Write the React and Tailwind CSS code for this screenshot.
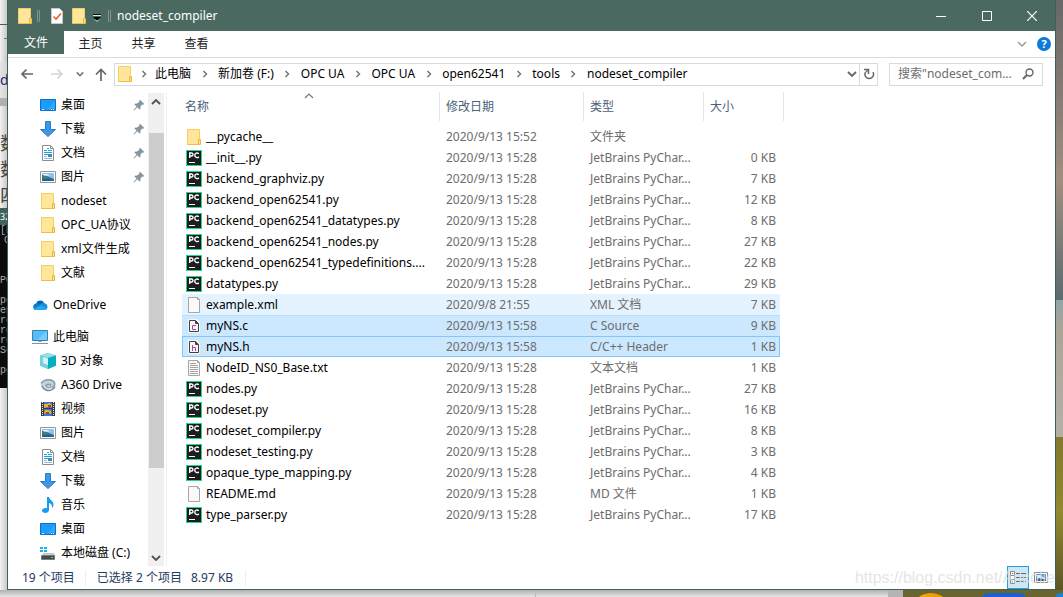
import React from "react";

const Folder = () => (
  <svg width="16" height="16" viewBox="0 0 16 16" className="shrink-0">
    <path d="M1.5.5h12v11h-1v4h-11z" fill="#ffe69a" stroke="#f3cf62" />
    <path d="M12.5 10.500h2v5h-2z" fill="#ffe08a" stroke="#e5bb3c" />
    <path d="M1.500 15.500h11" stroke="#e9c04a" />
  </svg>
);
const Desktop = () => (
  <svg width="16" height="16" viewBox="0 0 16 16" className="shrink-0">
    <path d="M.5 2.500h15v11H.5z" fill="#1a9cfb" stroke="#0f6fc0" />
    <path d="M15 3v8L7 13z" fill="#48b4ff" opacity=".5" />
    <path d="M2 12.500h2M11 12.500h1M13 12.500h1" stroke="#d8efff" />
  </svg>
);
const Download = () => (
  <svg width="16" height="16" viewBox="0 0 16 16" className="shrink-0">
    <path d="M5.500.5h5v8h5L8 15.600.5 8.500h5z" fill="#3f96e6" stroke="#2b7bcb" />
  </svg>
);
const Doc = () => (
  <svg width="16" height="16" viewBox="0 0 16 16" className="shrink-0">
    <path d="M2.500.5h8l3 3v12h-11z" fill="#fff" stroke="#8b8f93" />
    <path d="M10.500.5v3h3" fill="none" stroke="#8b8f93" />
    <path d="M7 3.500h2M4 5.500h3M8 5.500h4M4 7.500h8M4 9.500h4" stroke="#1f9be8" />
    <path d="M4 11.500h3M4 13.500h8" stroke="#9fb6c4" />
    <path d="M8 9h4v3H8z" fill="#3d8fae" />
  </svg>
);
const Picture = () => (
  <svg width="16" height="16" viewBox="0 0 16 16" className="shrink-0">
    <path d="M.5 2.500h15v11H.5z" fill="#fff" stroke="#92979c" />
    <path d="M2 4h12v8H2z" fill="#8cc4f0" />
    <path d="M2 6l5 1 7 3v2H2z" fill="#3f7a80" />
    <path d="M2 10.500l6-1 6 1.500v1H2z" fill="#2a5a9a" />
    <path d="M3 5h4l3 1.500H4z" fill="#eaf6ff" />
  </svg>
);
const OneDrive = () => (
  <svg width="16" height="16" viewBox="0 0 16 16" className="shrink-0">
    <path d="M4 6.500A4.500 4.500 0 0 1 12.200 6L9 10z" fill="#0364b8" />
    <path d="M3.500 13A3.400 3.400 0 0 1 4 6.400c1.500-.4 3 .2 4.500 1.500L12 11z" fill="#0f78d4" />
    <path d="M8 8c1.400-1.800 3-2.300 4.600-1.800A3.500 3.500 0 0 1 13 13H3.500z" fill="#1490df" />
    <path d="M1.500 12L8.500 8.200 15.300 11.500A2.600 2.600 0 0 1 13 13H3.500a3 3 0 0 1-2-1z" fill="#28a8ea" />
  </svg>
);
const Computer = () => (
  <svg width="16" height="16" viewBox="0 0 16 16" className="shrink-0">
    <path d="M.5 1.500h15v10H.5z" fill="#54bdfa" stroke="#3e7fa8" />
    <path d="M15 2v9L5 11z" fill="#8cd5ff" opacity=".6" />
    <path d="M6 12h4v1H6z" fill="#9fb0bb" />
    <path d="M0 14.500h16" stroke="#7d93a3" />
  </svg>
);
const Cube = () => (
  <svg width="16" height="16" viewBox="0 0 16 16" className="shrink-0">
    <path d="M8 0l8 2.500v10L8 16 0 12.500v-10z" fill="#35bccb" />
    <path d="M8 0l8 2.500L8 5 0 2.500z" fill="#9adfe6" />
    <path d="M0 2.500L8 5v11L0 12.500z" fill="#6fd2dc" />
    <path d="M8 5l8-2.500v10L8 16z" fill="#08aebf" />
    <path d="M3 4l5 1.500V12l-5-2z" fill="#d3f4f6" />
  </svg>
);
const A360 = () => (
  <svg width="16" height="16" viewBox="0 0 16 16" className="shrink-0">
    <path d="M1 7C3 2 11 .5 14.500 4c2 3 .5 8-5 9.500C5 14 2 12 1 9z" fill="#c3d1d9" />
    <path d="M1 6.500c3-4.500 10-5 13-1.500 2 3-.5 6-5 6-3 0-4-2.500-1.500-3.500 2-.6 3.500.5 3 1.500" fill="none" stroke="#86a0ae" strokeWidth="1.500" />
    <path d="M2 9c1.500 4 6 5.500 9.500 4 2-.8 3-2 3.500-3.500" fill="none" stroke="#6b8a9a" strokeWidth="1.300" />
    <path d="M4 9c2 3 5 3.500 8 1.800" fill="none" stroke="#eef4f7" />
  </svg>
);
const Video = () => (
  <svg width="16" height="16" viewBox="0 0 16 16" className="shrink-0">
    <path d="M1 1h14v14H1z" fill="#3b3b3d" />
    <path d="M2.500 1v14M13.500 1v14" stroke="#e8e8e8" strokeDasharray="1 1" />
    <path d="M4 1h8v6H4z" fill="#3f74d8" />
    <path d="M4 8h8v7H4z" fill="#3f74d8" />
    <path d="M4 3h3l2-1 3 2v2H8L4 7z" fill="#eab22a" />
    <path d="M5 9h3l3 1v3l-4-1-3 1z" fill="#eab22a" />
    <path d="M8 4h3v2H8zM6 11h3v2H6z" fill="#b3392e" />
  </svg>
);
const Music = () => (
  <svg width="16" height="16" viewBox="0 0 16 16" className="shrink-0">
    <path d="M7 0h2c.4 3 4.500 4 4.500 7.500 0 1.500-.5 2.700-1.500 3.500.5-3-1-4.300-3-5v7c0 2-1.800 3-3.600 3C3.500 16 2 15 2 13.500S3.800 11 5.500 11c.6 0 1 .1 1.500.3z" fill="#149cf5" />
  </svg>
);
const Disk = () => (
  <svg width="16" height="16" viewBox="0 0 16 16" className="shrink-0">
    <path d="M0 2h3v2H0zM4 2h3v2H4zM0 5h3v2H0zM4 5h3v2H4z" fill="#18b3ee" />
    <path d="M3 8h11l1 3H2z" fill="#c5c9cc" />
    <path d="M1.500 10.500h13v4h-13z" fill="#45494c" stroke="#7a7e81" />
    <path d="M11 12.500h2" stroke="#5ee04f" />
  </svg>
);
const PyCharm = () => (
  <svg width="16" height="16" viewBox="0 0 16 16" className="shrink-0">
    <path d="M0 0h16v16H0z" fill="#21d789" />
    <path d="M1 1h14v14H1z" fill="#1d1d1f" />
    <path d="M3.700 8V3h1.800a1.500 1.500 0 0 1 0 3H4M12.800 3.700C11.300 2.400 8.800 3 8.800 5.300s2.500 2.900 4 1.600" fill="none" stroke="#fff" strokeWidth="1.400" />
    <path d="M3 12.500h6" stroke="#fff" />
  </svg>
);
const Page = ({ lines }) => (
  <svg width="16" height="16" viewBox="0 0 16 16" className="shrink-0">
    <path d="M2.500.5h9l2 2v13h-11z" fill="#fafafa" stroke="#a6a6a6" />
    <path d="M11.500.5v2h2" fill="none" stroke="#a6a6a6" />
    {lines && <path d="M4 3.500h6M4 5.500h8M4 7.500h8M4 9.500h8M4 11.500h8M4 13.500h8" stroke="#a3a3a3" />}
  </svg>
);
const CodeC = () => (
  <svg width="16" height="16" viewBox="0 0 16 16" className="shrink-0">
    <path d="M2 1h9l3 3v11H2z" fill="#f6f6f6" />
    <path d="M3.500 2.500h6l3 3v8h-9z" fill="#f6f6f6" stroke="#424242" />
    <path d="M9.500 2.500v3h3" fill="#424242" stroke="#424242" />
    <path d="M10 7.500H6.500v4H10" fill="none" stroke="#9b4f96" />
  </svg>
);
const CodeH = () => (
  <svg width="16" height="16" viewBox="0 0 16 16" className="shrink-0">
    <path d="M2 1h9l3 3v11H2z" fill="#f6f6f6" />
    <path d="M3.500 2.500h6l3 3v8h-9z" fill="#f6f6f6" stroke="#424242" />
    <path d="M9.500 2.500v3h3" fill="#424242" stroke="#424242" />
    <path d="M6.500 6v6M6.500 8.500h3V12" fill="none" stroke="#9b4f96" />
  </svg>
);
const Pin = () => (
  <svg width="12" height="12" viewBox="0 0 12 12" className="shrink-0">
    <path d="M7 .8L11.200 5l-1 .8-.8-.2-2 2 .2 2-1 1L4.300 8.300 1 11.400l-.5-.5L3.600 7.600 1.400 5.400l1-1 2 .2 2-2-.2-.9z" fill="#8494a0" />
  </svg>
);
const Chevron = ({ dir = "down", color = "#666", size = 10, width = 1.5 }) => {
  const paths = { down: "M1 3l4 4 4-4", up: "M1 7l4-4 4 4", right: "M3.500 2l3 3-3 3" };
  return (
    <svg width={size} height={size} viewBox="0 0 10 10" className="shrink-0">
      <path d={paths[dir]} fill="none" stroke={color} strokeWidth={width} />
    </svg>
  );
};

const quick = [
  [Desktop, "桌面", true],
  [Download, "下载", true],
  [Doc, "文档", true],
  [Picture, "图片", true],
  [Folder, "nodeset"],
  [Folder, "OPC_UA协议"],
  [Folder, "xml文件生成"],
  [Folder, "文献"],
];
const computer = [
  [Cube, "3D 对象"],
  [A360, "A360 Drive"],
  [Video, "视频"],
  [Picture, "图片"],
  [Doc, "文档"],
  [Download, "下载"],
  [Music, "音乐"],
  [Desktop, "桌面"],
  [Disk, "本地磁盘 (C:)"],
];
const D = "2020/9/13 15:28";
const PY = "JetBrains PyChar...";
const TextPage = () => <Page lines />;
const files = [
  [Folder, "__pycache__", "2020/9/13 15:52", "文件夹", ""],
  [PyCharm, "__init__.py", D, PY, "0 KB"],
  [PyCharm, "backend_graphviz.py", D, PY, "7 KB"],
  [PyCharm, "backend_open62541.py", D, PY, "12 KB"],
  [PyCharm, "backend_open62541_datatypes.py", D, PY, "8 KB"],
  [PyCharm, "backend_open62541_nodes.py", D, PY, "27 KB"],
  [PyCharm, "backend_open62541_typedefinitions....", D, PY, "22 KB"],
  [PyCharm, "datatypes.py", D, PY, "29 KB"],
  [Page, "example.xml", "2020/9/8 21:55", "XML 文档", "7 KB", "hover"],
  [CodeC, "myNS.c", "2020/9/13 15:58", "C Source", "9 KB", "selected"],
  [CodeH, "myNS.h", "2020/9/13 15:58", "C/C++ Header", "1 KB", "focused"],
  [TextPage, "NodeID_NS0_Base.txt", D, "文本文档", "1 KB"],
  [PyCharm, "nodes.py", D, PY, "27 KB"],
  [PyCharm, "nodeset.py", D, PY, "16 KB"],
  [PyCharm, "nodeset_compiler.py", D, PY, "8 KB"],
  [PyCharm, "nodeset_testing.py", D, PY, "3 KB"],
  [PyCharm, "opaque_type_mapping.py", D, PY, "4 KB"],
  [Page, "README.md", D, "MD 文件", "1 KB"],
  [PyCharm, "type_parser.py", D, PY, "17 KB"],
];
const cellStyle = {
  hover: "bg-[#e5f3ff] border-y border-[#e5f3ff]",
  selected: "bg-[#cce8ff] border-y border-t-[#b5dcff] border-b-[#cce8ff]",
  focused: "bg-[#cce8ff] border-y border-[#84c5fb]",
  none: "border-y border-transparent",
};
const path = ["此电脑", "新加卷 (F:)", "OPC UA", "OPC UA", "open62541", "tools", "nodeset_compiler"];

function NavItem({ Icon, label, pinned, root }) {
  return (
    <li>
      <a href="#" className={`flex h-6 items-center gap-[5px] pr-[3px] text-black ${root ? "pl-6" : "pl-8"}`}>
        <Icon />
        <span className="flex-1 whitespace-nowrap">{label}</span>
        {pinned && <Pin />}
      </a>
    </li>
  );
}

function TitleBar() {
  return (
    <header className="flex h-[31px] items-center bg-[#4a6a61] pl-[9px] text-white">
      <Folder />
      <span className="ml-1 h-3 w-[3px] border-x border-[#81968f]" />
      <button aria-label="属性" className="ml-[9px]">
        <svg width="16" height="16" viewBox="0 0 16 16">
          <path d="M2.500.5h8l3 3v12h-11z" fill="#fff" stroke="#c8c8c8" />
          <path d="M4.500 8.500L7 11l5-5.500" fill="none" stroke="#e8602c" strokeWidth="1.600" />
        </svg>
      </button>
      <button aria-label="新建文件夹" className="ml-[6px]"><Folder /></button>
      <button aria-label="自定义快速访问工具栏" className="ml-[6px] pt-1">
        <svg width="8" height="8" viewBox="0 0 8 8">
          <path d="M0 .5h8" stroke="#111" />
          <path d="M0 1.500h8" stroke="#dfe6e3" />
          <path d="M0 3h8L4 7z" fill="#000" />
          <path d="M2 5.500L4 7.500l2-2" fill="none" stroke="#dfe6e3" />
        </svg>
      </button>
      <span className="ml-[7px] h-3 w-[3px] border-x border-[#81968f]" />
      <h1 className="ml-[6px] flex-1">nodeset_compiler</h1>
      <button aria-label="最小化" className="flex h-full w-[46px] items-center justify-center">
        <svg width="10" height="10" viewBox="0 0 10 10"><path d="M0 5.500h10" stroke="#fff" /></svg>
      </button>
      <button aria-label="最大化" className="flex h-full w-[45px] items-center justify-center">
        <svg width="10" height="10" viewBox="0 0 10 10"><path d="M.5.5h9v9h-9z" fill="none" stroke="#fff" /></svg>
      </button>
      <button aria-label="关闭" className="flex h-full w-[46px] items-center justify-center">
        <svg width="10" height="10" viewBox="0 0 10 10"><path d="M0 0l10 10M10 0L0 10" stroke="#fff" strokeWidth="1.200" /></svg>
      </button>
    </header>
  );
}

function Ribbon() {
  return (
    <div className="flex h-[27px] items-start border-b border-[#dadbdc] text-[#222]">
      <button className="h-[23px] w-14 bg-[#4a6a61] pt-px text-white">文件</button>
      <button className="h-[26px] w-[53px]">主页</button>
      <button className="h-[26px] w-[53px]">共享</button>
      <button className="h-[26px] w-[53px]">查看</button>
      <div className="ml-auto flex h-[26px] items-center gap-[10px] pr-1">
        <button aria-label="展开功能区"><Chevron color="#999" /></button>
        <button aria-label="帮助" className="flex size-[14px] items-center justify-center rounded-full bg-[#0c7ad8] text-[11px] font-bold text-white">?</button>
      </div>
    </div>
  );
}

function AddressRow() {
  return (
    <div className="mb-[2px] flex h-8 items-center pl-3 pr-3">
      <button aria-label="后退" className="w-[14px]">
        <svg width="14" height="12" viewBox="0 0 14 12"><path d="M13 6H2M6.500 1.500L2 6l4.500 4.500" fill="none" stroke="#666" strokeWidth="1.700" /></svg>
      </button>
      <button aria-label="前进" className="ml-4 w-[14px]">
        <svg width="14" height="12" viewBox="0 0 14 12"><path d="M1 6h11M7.500 1.500L12 6l-4.500 4.500" fill="none" stroke="#d4d4d4" strokeWidth="1.700" /></svg>
      </button>
      <button aria-label="最近浏览的位置" className="ml-3"><Chevron size={8} width={2} color="#777" /></button>
      <button aria-label="上移" className="ml-[11px]">
        <svg width="12" height="13" viewBox="0 0 12 13"><path d="M6 13V2M1 6.500l5-5 5 5" fill="none" stroke="#666" strokeWidth="1.700" /></svg>
      </button>
      <div className="ml-[7px] flex h-[23px] flex-1 items-center border border-[#d9d9d9] pl-[2px]">
        <Folder />
        <nav className="flex flex-1 items-center whitespace-nowrap text-black">
          {path.map((p, i) => (
            <React.Fragment key={i}>
              <span className={`flex justify-center ${i ? "w-[27px]" : "w-[22px]"}`}><Chevron dir="right" color="#777" /></span>
              <a href="#">{p}</a>
            </React.Fragment>
          ))}
        </nav>
        <button aria-label="以前的位置" className="flex w-[14px] justify-center"><Chevron width={1.800} /></button>
        <button aria-label="刷新" className="flex h-full w-[18px] items-center justify-center border-l border-[#d9d9d9]">
          <svg width="12" height="12" viewBox="0 0 12 12">
            <path d="M10 4.200A4.300 4.300 0 1 1 2.300 4.500" fill="none" stroke="#666" strokeWidth="1.500" />
            <path d="M1 1.500h4.500V6" fill="none" stroke="#666" strokeWidth="1.500" />
            <path d="M5.500 1.500L2.300 4.700" fill="none" stroke="#666" strokeWidth="1.200" />
          </svg>
        </button>
      </div>
      <label className="ml-[11px] flex h-[23px] w-[154px] items-center border border-[#d9d9d9] pl-2 pr-2">
        <input aria-label="搜索" placeholder={'搜索"nodeset_com...'} className="min-w-0 flex-1 outline-none placeholder:text-[#6d6d6d]" />
        <svg width="12" height="12" viewBox="0 0 12 12" className="shrink-0">
          <circle cx="7.500" cy="4.500" r="3.500" fill="none" stroke="#666" strokeWidth="1.400" />
          <path d="M5 7L1 11" stroke="#666" strokeWidth="2" />
        </svg>
      </label>
    </div>
  );
}

function Sidebar() {
  return (
    <aside className="flex border-r border-[#f0f0f0] pr-[2px]">
      <nav className="w-[140px] py-px">
        <ul>{quick.map(([I, l, p]) => <NavItem key={l} Icon={I} label={l} pinned={p} />)}</ul>
        <ul className="mt-2"><NavItem Icon={OneDrive} label="OneDrive" root /></ul>
        <ul className="mt-2">
          <NavItem Icon={Computer} label="此电脑" root />
          {computer.map(([I, l]) => <NavItem key={l} Icon={I} label={l} />)}
        </ul>
      </nav>
      <div className="mt-px flex w-4 flex-col items-center bg-[#f0f0f0]">
        <button aria-label="向上滚动" className="flex h-[18px] w-full items-center justify-center"><Chevron dir="up" width={1.800} color="#505050" /></button>
        <div className="mt-[22px] h-[335px] w-[15px] bg-[#cdcdcd]" />
        <button aria-label="向下滚动" className="mt-auto flex h-[17px] w-full items-center justify-center"><Chevron width={1.800} color="#505050" /></button>
      </div>
    </aside>
  );
}

function FileTable() {
  const head = "h-[29px] border-r border-[#e5e5e5] text-left font-normal text-[#4c607a]";
  return (
    <main className="flex-1 pl-[15px]">
      <table className="w-[602px] table-fixed border-separate border-spacing-0 whitespace-nowrap">
        <colgroup>
          <col className="w-[258px]" /><col className="w-[144px]" /><col className="w-[120px]" /><col className="w-[76px]" /><col className="w-1" />
        </colgroup>
        <thead>
          <tr>
            <th className={`${head} pl-[3px]`}>
              <button className="relative">名称
                <span className="absolute -top-2 left-[119px]"><Chevron dir="up" color="#777" width={1.200} /></span>
              </button>
            </th>
            <th className={`${head} pl-[6px]`}><button>修改日期</button></th>
            <th className={`${head} pl-[6px]`}><button>类型</button></th>
            <th colSpan={2} className={`${head} pl-[6px]`}><button>大小</button></th>
          </tr>
        </thead>
        <tbody>
          <tr aria-hidden="true"><td colSpan={5} className="h-[5px]" /></tr>
          {files.map(([Icon, name, date, type, size, state]) => {
            const s = cellStyle[state || "none"];
            const focused = state === "focused";
            return (
              <tr key={name} className="h-[21px] text-[#6d6d6d]">
                <td className={`${s} p-0 text-black ${focused ? "border-l pl-[3px]" : "pl-1"}`}>
                  <span className="flex h-[19px] items-center gap-1"><Icon />{name}</span>
                </td>
                <td className={`${s} p-0 pl-[6px]`}>{date}</td>
                <td className={`${s} p-0 pl-[6px]`}>{type}</td>
                <td className={`${s} p-0 text-right ${focused ? "border-r pr-[3px]" : "pr-1"}`}>{size}</td>
              </tr>
            );
          })}
        </tbody>
      </table>
    </main>
  );
}

function StatusBar() {
  return (
    <footer className="relative flex h-[23px] items-center pl-[14px] pr-[3px] text-[#1e3a5f]">
      <span className="border-r border-[#eee] pr-[10px]">19 个项目</span>
      <span className="pl-[11px]">已选择 2 个项目</span>
      <span className="border-r border-[#eee] pl-[9px] pr-3">8.97 KB</span>
      <div className="ml-auto flex items-center">
        <button aria-label="详细信息" className="flex h-[23px] w-[22px] items-center justify-center border border-[#26a0da] bg-[#cce8f6]">
          <svg width="16" height="13" viewBox="0 0 16 13">
            <path d="M.5.5h4v12h-4zM.5 4.500h4M.5 8.500h4" fill="#fff" stroke="#8a8a8a" />
            <path d="M6 2.500h4M11 2.500h5M6 6.500h4M11 6.500h5M6 10.500h4M11 10.500h5" stroke="#6b6b6b" />
            <path d="M2 2h1v1H2zM2 10h1v1H2z" fill="#b04040" />
          </svg>
        </button>
        <button aria-label="大图标" className="flex h-[23px] w-[23px] items-center justify-center">
          <svg width="14" height="11" viewBox="0 0 14 11">
            <path d="M.5.5h13v10H.5z" fill="#fff" stroke="#8a8a8a" />
            <path d="M2 2h10v7H2z" fill="#4f8fe0" />
            <path d="M3 3h4v1l4 2v1H3z" fill="#d8ecff" />
            <path d="M2 7l4-1 6 2v1H2z" fill="#3a5a66" />
          </svg>
        </button>
      </div>
      <span className="pointer-events-none absolute right-0 top-1 font-['Liberation_Sans'] text-base leading-4 text-[#dedede]/80">https://blog.csdn.net/Ancolie</span>
    </footer>
  );
}

function LeftEdge() {
  return (
    <div className="flex w-[7px] flex-col overflow-hidden whitespace-nowrap bg-linear-to-r from-[#f2f2f2] to-[#c9c9c9] text-[#444]">
      <div className="h-[62px] pt-6"><div className="h-px w-[7px] bg-[#555]" /><div className="ml-1 mt-[13px] h-px w-1 bg-[#777]" /></div>
      <div className="h-[36px] bg-[#dcdcdc]/60 pt-2 text-sm text-[#1a2a80]">d</div>
      <div className="h-2 bg-[#b0b0b0]" />
      <div className="h-[102px] pt-[24px] text-[18px] leading-[26px]">
        <p>数</p><p>数</p><p>四</p>
      </div>
      <div className="h-[17px] bg-[#40625a] text-[9px] leading-[17px] text-white">32</div>
      <div className="h-[163px] bg-[#0c0c0c] pt-px font-['Liberation_Mono'] text-[10px] leading-[10px] text-[#aaa]">
        <p>[H</p><p className="pl-1">C</p><p className="pt-[30px]">PO</p><p className="pt-[10px]">pe</p><p>en</p><p>ro</p><p>ro</p><p>re</p><p>Se</p><p className="pt-[10px]">pe</p>
      </div>
    </div>
  );
}

export default function App() {
  return (
    <div className="flex min-h-screen flex-col bg-[#e3e3e3] font-['Noto_Sans','Noto_Sans_CJK_SC',sans-serif] text-xs leading-4">
      <div className="flex">
        <LeftEdge />
        <div className="flex min-w-0 flex-1 flex-col border-b border-l border-r border-[#3f6256] bg-white">
          <TitleBar />
          <Ribbon />
          <AddressRow />
          <div className="flex">
            <Sidebar />
            <FileTable />
          </div>
          <StatusBar />
        </div>
        <div className="flex w-[7px] flex-col">
          <div className="h-[300px] bg-linear-to-b from-[#686868] via-[#a08f80] via-60% to-[#5c6b70]" />
          <div className="h-[137px] bg-linear-to-b from-[#8fa5a8] via-[#aaa498] via-20% to-[#b5b0a6]" />
          <div className="flex-1 bg-linear-to-b from-[#827a2e] via-[#928930] to-[#5c5626]" />
        </div>
      </div>
      <div className="flex h-[7px] overflow-hidden">
        <div className="w-[536px] border-r border-[#bbb] bg-linear-to-b from-[#b0b0b0] to-[#e6e6e6]" />
        <div className="flex-1 bg-linear-to-b from-[#b0b0b0] to-[#e6e6e6]" />
        <div className="w-[15px] bg-[#b4b4b4]" />
        <div className="flex w-[160px] items-start bg-[#6a6430] pt-[3px]">
          <div className="ml-2 h-10 w-10 rounded-full bg-linear-to-r from-[#f5b400] to-[#f08c00]" />
          <div className="ml-[30px] h-10 w-[46px] rounded-lg bg-[#1763d6]" />
          <div className="ml-auto h-10 w-[7px] rounded-tl bg-[#1684d8]" />
        </div>
      </div>
    </div>
  );
}
